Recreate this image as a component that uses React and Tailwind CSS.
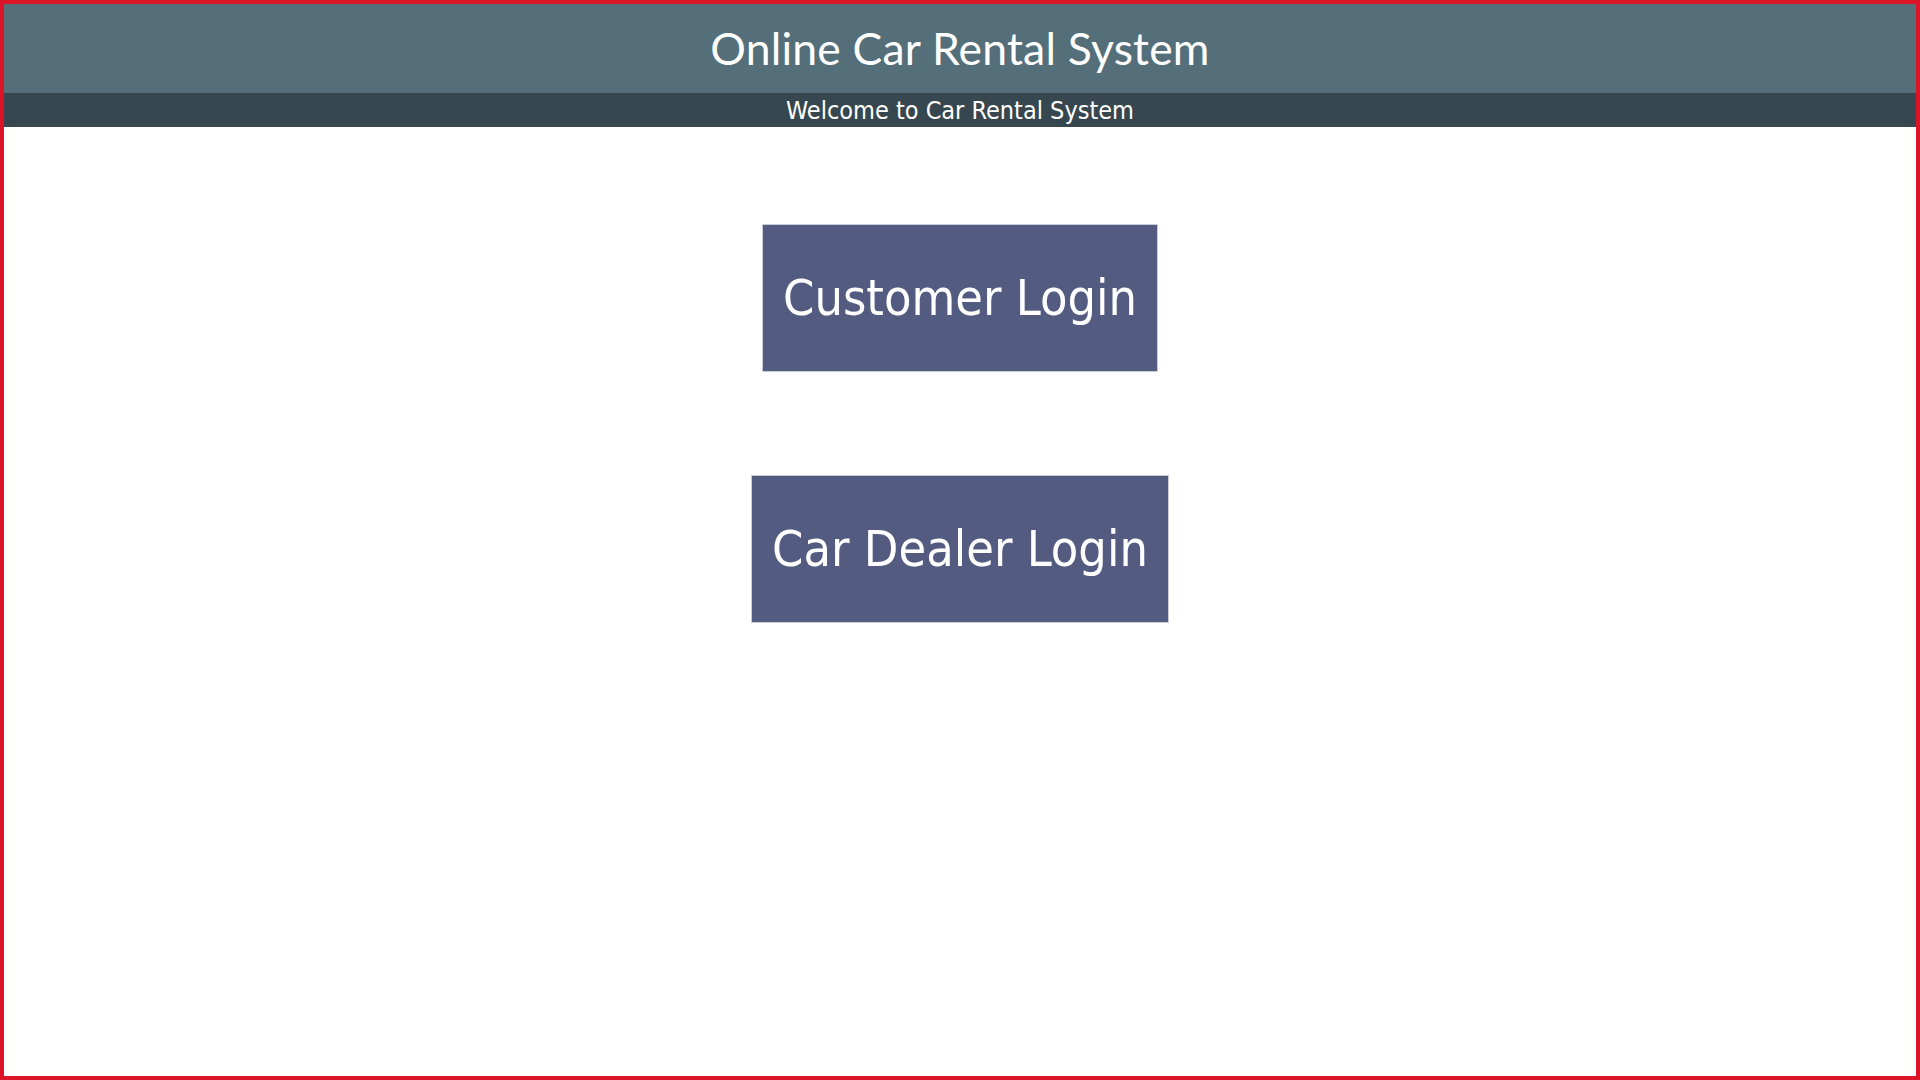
export default function App() {
  return (
    <div className="h-screen w-full border-4 border-[#dc1428] bg-white flex flex-col">
      {/* Header */}
      <header className="bg-[#546e7a] h-[89px] flex items-center justify-center">
        <h1 className="text-white text-[44.5px] leading-none font-['Lato',sans-serif] tracking-[0.2px] pb-[1px]">
          Online Car Rental System
        </h1>
      </header>
      <div className="bg-[#37474f] h-[34px] flex items-center justify-center">
        <p className="text-white text-[25px] leading-none font-['DejaVu_Sans_Condensed','DejaVu_Sans',sans-serif]">
          Welcome to Car Rental System
        </p>
      </div>

      {/* Login options */}
      <main className="flex flex-col items-center pt-[97px] gap-[103px]">
        <LoginButton label="Customer Login" />
        <LoginButton label="Car Dealer Login" />
      </main>
    </div>
  )
}

function LoginButton({ label }) {
  return (
    <button className="bg-[#535b80] border border-[#c9ccd8] text-white text-[50px] leading-[60px] px-[20px] py-[43px] font-['DejaVu_Sans_Condensed','DejaVu_Sans',sans-serif] cursor-pointer">
      {label}
    </button>
  )
}
